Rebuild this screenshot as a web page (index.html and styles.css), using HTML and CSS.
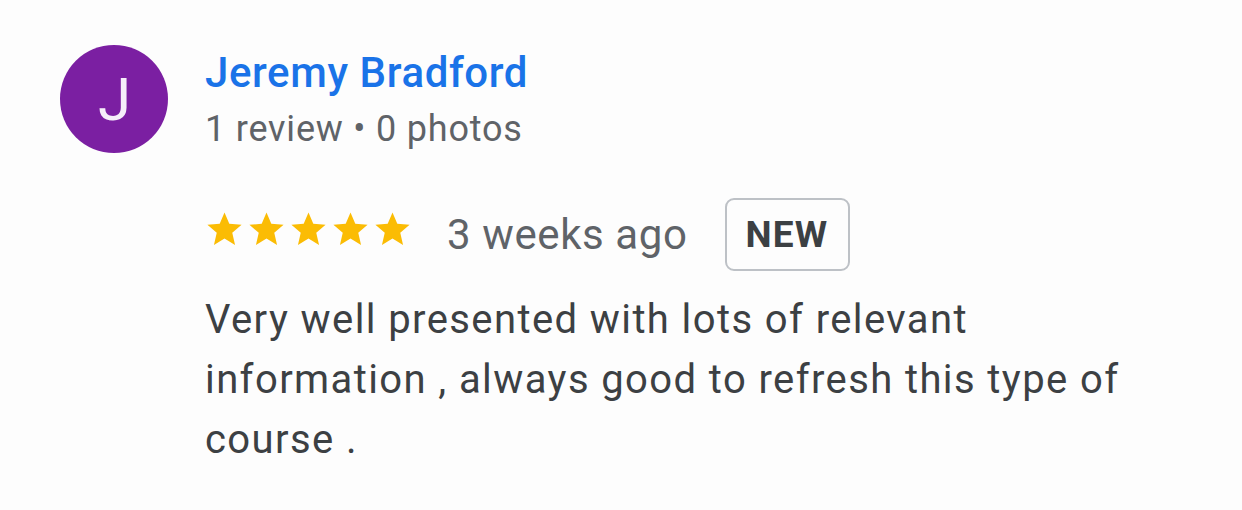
FILE: index.html
```html
<!DOCTYPE html>
<html>
<head>
<meta charset="utf-8">
<link rel="stylesheet" href="styles.css">
</head>
<body>
<div class="review">
  <div class="header">
    <div class="avatar"><span class="initial">J</span></div>
    <div class="who">
      <div class="name">Jeremy Bradford</div>
      <div class="meta">1 review • 0 photos</div>
    </div>
  </div>
  <div class="content">
    <div class="rating-row">
      <div class="stars">
        <svg viewBox="0 0 24 24" class="star"><path d="M12 17.27L18.18 21l-1.64-7.03L22 9.24l-7.19-.61L12 2 9.19 8.63 2 9.24l5.46 4.73L5.82 21z"/></svg>
        <svg viewBox="0 0 24 24" class="star"><path d="M12 17.27L18.18 21l-1.64-7.03L22 9.24l-7.19-.61L12 2 9.19 8.63 2 9.24l5.46 4.73L5.82 21z"/></svg>
        <svg viewBox="0 0 24 24" class="star"><path d="M12 17.27L18.18 21l-1.64-7.03L22 9.24l-7.19-.61L12 2 9.19 8.63 2 9.24l5.46 4.73L5.82 21z"/></svg>
        <svg viewBox="0 0 24 24" class="star"><path d="M12 17.27L18.18 21l-1.64-7.03L22 9.24l-7.19-.61L12 2 9.19 8.63 2 9.24l5.46 4.73L5.82 21z"/></svg>
        <svg viewBox="0 0 24 24" class="star"><path d="M12 17.27L18.18 21l-1.64-7.03L22 9.24l-7.19-.61L12 2 9.19 8.63 2 9.24l5.46 4.73L5.82 21z"/></svg>
      </div>
      <span class="time">3 weeks ago</span>
      <span class="badge">NEW</span>
    </div>
    <p class="text">Very well presented with lots of relevant<br>information , always good to refresh this type of<br>course .</p>
  </div>
</div>
</body>
</html>
```
FILE: styles.css
```css
html, body {
  margin: 0;
  background: #fdfdfd;
}
body {
  font-family: Roboto, "Noto Sans", sans-serif;
  width: 1242px;
  height: 510px;
  overflow: hidden;
}
.review {
  padding: 45px 0 0 60px;
}
.header {
  display: flex;
  align-items: flex-start;
  gap: 37px;
}
.avatar {
  width: 108px;
  height: 108px;
  flex: none;
  border-radius: 50%;
  background: #7b1fa2;
  color: #f6eefa;
  display: flex;
  align-items: center;
  justify-content: center;
}
.initial {
  font-size: 60px;
  line-height: 60px;
  padding-top: 2px;
  padding-left: 1px;
}
.who {
  display: flex;
  flex-direction: column;
}
.name {
  font-size: 42px;
  font-weight: 500;
  color: #1a73e8;
  line-height: 56px;
  letter-spacing: 0.6px;
}
.meta {
  font-size: 36px;
  color: #5f6368;
  line-height: 56px;
  letter-spacing: 0.8px;
}
.content {
  padding-left: 145px;
  margin-top: 41px;
}
.rating-row {
  display: flex;
  align-items: center;
  height: 73px;
}
.stars {
  display: flex;
  gap: 1px;
  margin-left: -1px;
  margin-bottom: 10px;
}
.star {
  width: 41px;
  height: 41px;
  fill: #fbbc04;
  display: block;
}
.time {
  font-size: 42px;
  color: #5f6368;
  margin-left: 34px;
  letter-spacing: 0.6px;
}
.badge {
  margin-left: 37px;
  border: 2px solid #bdc1c6;
  border-radius: 9px;
  box-sizing: border-box;
  height: 73px;
  padding: 0 20px 0 19px;
  display: flex;
  align-items: center;
  font-size: 37px;
  font-weight: 700;
  color: #3c4043;
  letter-spacing: 1.2px;
}
.text {
  margin: 19px 0 0 0;
  font-size: 40px;
  line-height: 60px;
  color: #3c4043;
  letter-spacing: 1.4px;
}
```
